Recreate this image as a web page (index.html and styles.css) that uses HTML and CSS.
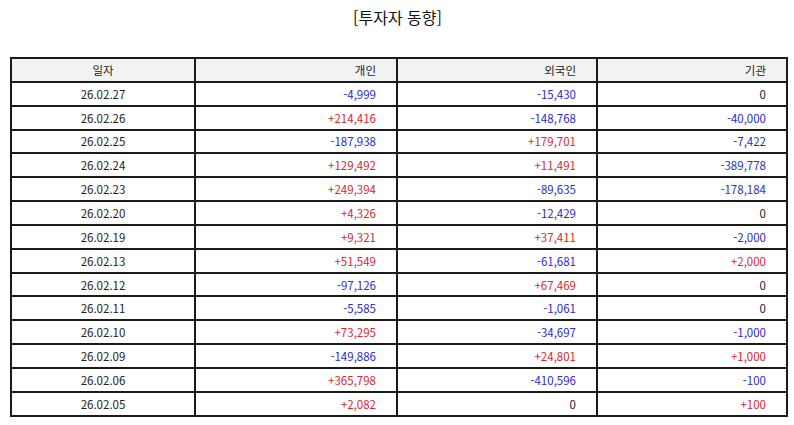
FILE: index.html
```html
<!DOCTYPE html>
<html lang="ko">
<head>
<meta charset="utf-8">
<link rel="stylesheet" href="styles.css">
</head>
<body>
<div class="page">
  <h1 class="title">[투자자 동향]</h1>
  <table class="grid">
    <colgroup>
      <col class="c1"><col class="c2"><col class="c3"><col class="c4">
    </colgroup>
    <thead>
      <tr><th class="date">일자</th><th>개인</th><th>외국인</th><th>기관</th></tr>
    </thead>
    <tbody>
      <tr><td class="date">26.02.27</td><td class="dn">-4,999</td><td class="dn">-15,430</td><td>0</td></tr>
      <tr><td class="date">26.02.26</td><td class="up">+214,416</td><td class="dn">-148,768</td><td class="dn">-40,000</td></tr>
      <tr><td class="date">26.02.25</td><td class="dn">-187,938</td><td class="up">+179,701</td><td class="dn">-7,422</td></tr>
      <tr><td class="date">26.02.24</td><td class="up">+129,492</td><td class="up">+11,491</td><td class="dn">-389,778</td></tr>
      <tr><td class="date">26.02.23</td><td class="up">+249,394</td><td class="dn">-89,635</td><td class="dn">-178,184</td></tr>
      <tr><td class="date">26.02.20</td><td class="up">+4,326</td><td class="dn">-12,429</td><td>0</td></tr>
      <tr><td class="date">26.02.19</td><td class="up">+9,321</td><td class="up">+37,411</td><td class="dn">-2,000</td></tr>
      <tr><td class="date">26.02.13</td><td class="up">+51,549</td><td class="dn">-61,681</td><td class="up">+2,000</td></tr>
      <tr><td class="date">26.02.12</td><td class="dn">-97,126</td><td class="up">+67,469</td><td>0</td></tr>
      <tr><td class="date">26.02.11</td><td class="dn">-5,585</td><td class="dn">-1,061</td><td>0</td></tr>
      <tr><td class="date">26.02.10</td><td class="up">+73,295</td><td class="dn">-34,697</td><td class="dn">-1,000</td></tr>
      <tr><td class="date">26.02.09</td><td class="dn">-149,886</td><td class="up">+24,801</td><td class="up">+1,000</td></tr>
      <tr><td class="date">26.02.06</td><td class="up">+365,798</td><td class="dn">-410,596</td><td class="dn">-100</td></tr>
      <tr><td class="date">26.02.05</td><td class="up">+2,082</td><td>0</td><td class="up">+100</td></tr>
    </tbody>
  </table>
</div>
</body>
</html>
```
FILE: styles.css
```css
html, body {
  margin: 0;
  padding: 0;
  background: #fff;
}
body {
  font-family: "Noto Sans CJK KR", "Noto Sans", sans-serif;
  color: #222;
}
.page {
  padding: 5px 9px 0 10px;
}
.title {
  margin: 0 0 28px 0;
  font-size: 16px;
  font-weight: normal;
  text-align: center;
  line-height: 24px;
  color: #111;
}
.grid {
  width: 776px;
  border-collapse: collapse;
  table-layout: fixed;
  font-size: 11.5px;
}
.c1 { width: 184px; }
.c2 { width: 202px; }
.c3 { width: 200px; }
.c4 { width: 190px; }
.grid th, .grid td {
  border: 2px solid #1a1a1a;
  height: 21.85px;
  padding: 0 20px 0 0;
  text-align: right;
  font-weight: normal;
  line-height: 16px;
  color: #222;
}
.grid th {
  background: #f2f2f2;
}
.grid .date {
  text-align: center;
  padding: 0;
}
.grid .up { color: #e0242e; }
.grid .dn { color: #2b2bd0; }
```
